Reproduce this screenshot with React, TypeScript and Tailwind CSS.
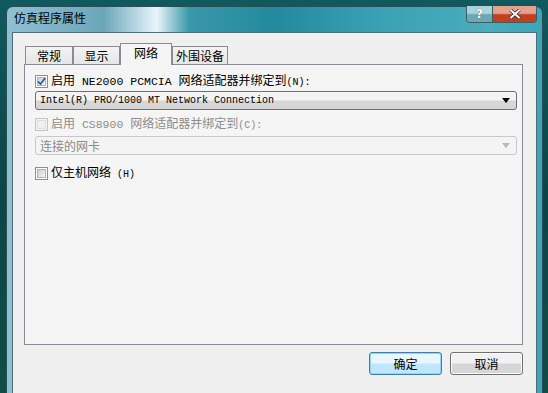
import React from "react";

const cjk = '"Noto Sans CJK SC", "Noto Sans", sans-serif';
const mono = '"Liberation Mono", "DejaVu Sans Mono", monospace';

function Latin({ children, big }: { children: React.ReactNode; big?: boolean }) {
  return (
    <span className={`whitespace-pre ${big ? "text-[11.5px]" : "text-[10px]"}`} style={{ fontFamily: mono }}>
      {children}
    </span>
  );
}

function Checkbox({ checked, disabled }: { checked?: boolean; disabled?: boolean }) {
  return (
    <div
      className={`flex h-[13px] w-[13px] shrink-0 items-center justify-center border ${
        disabled ? "border-[#c6c6c6] bg-[#f4f4f4]" : "border-[#8e8f8f] bg-white"
      }`}
    >
      <div
        className={`relative h-[9px] w-[9px] border ${
          disabled
            ? "border-[#e0e0e0] bg-[#f0f0f0]"
            : "border-[#b3b3b3] bg-gradient-to-br from-[#cbcfd5] to-[#f6f6f6]"
        }`}
      >
        {checked && (
          <svg viewBox="0 0 9 9" className="absolute left-[-1px] top-[-1px] h-[9px] w-[9px]">
            <path d="M1 4.5 L3.5 7 L8 1.2" fill="none" stroke="#2d56a8" strokeWidth="1.7" />
          </svg>
        )}
      </div>
    </div>
  );
}

function Select({ text, disabled, monoText }: { text: string; disabled?: boolean; monoText?: boolean }) {
  return (
    <div
      className={`flex h-[19px] w-[482px] items-center justify-between rounded-[3px] border pl-[4px] pr-[6px] ${
        disabled
          ? "border-[#c9c9c9] bg-[#f4f4f4] text-[#8a8a8a]"
          : "border-[#707070] bg-gradient-to-b from-[#f4f4f4] from-45% to-[#d6d6d6] to-55% text-black"
      }`}
    >
      {monoText ? (
        <span className="text-[10px] leading-none" style={{ fontFamily: mono }}>
          {text}
        </span>
      ) : (
        <span className="text-[12px] leading-none">{text}</span>
      )}
      <svg viewBox="0 0 8 5" className="h-[5px] w-[8px]">
        <path d="M0 0 H8 L4 5 Z" fill={disabled ? "#b8b8b8" : "#000"} />
      </svg>
    </div>
  );
}

function Tab({ label, width, selected }: { label: string; width: number; selected?: boolean }) {
  return (
    <div
      className={`flex items-center justify-center border border-b-0 border-[#898c95] text-[12px] leading-none ${
        selected
          ? "relative z-10 -mb-px h-[22px] bg-[#f5f5f5] pb-[3px]"
          : "h-[18px] bg-gradient-to-b from-[#f3f3f3] to-[#e6e6e6] pt-[1px]"
      }`}
      style={{ width }}
    >
      {label}
    </div>
  );
}

function Button({ label, focused }: { label: string; focused?: boolean }) {
  return (
    <div
      className={`flex h-[23px] w-[73px] items-center justify-center rounded-[3px] border text-[12px] ${
        focused
          ? "border-[#3c7fb1] bg-gradient-to-b from-[#eaf6fd] from-45% to-[#bee6fd] to-55% shadow-[inset_0_0_0_1px_#8fd4f9]"
          : "border-[#707070] bg-gradient-to-b from-[#f2f2f2] from-45% to-[#d6d6d6] to-55% shadow-[inset_0_0_0_1px_#fbfbfb]"
      }`}
    >
      {label}
    </div>
  );
}

export default function App() {
  return (
    <div
      className="h-[393px] w-[548px] overflow-hidden bg-gradient-to-b from-[#0f5a5e] via-[#0c4547] to-[#0f4d45] pl-[6px] pt-[6px]"
      style={{ fontFamily: cjk }}
    >
      <div className="flex h-[394px] w-[537px] flex-col rounded-t-[7px] border border-[#2c4d55] bg-[linear-gradient(90deg,#8fc0d4_0%,#6aa6b8_18%,#cfe6f2_26%,#e9f4fa_28%,#3a98aa_34%,#228a9d_50%,#3aa2b4_70%,#4aacbc_90%,#3aa6b8_100%)] px-[5px]">
        {/* title bar */}
        <div className="flex h-[25px] shrink-0 items-start justify-between">
          <span className="pl-[2px] pt-[5px] text-[12px] leading-none text-black">仿真程序属性</span>
          <div className="-mt-px flex h-[17px] overflow-hidden rounded-b-[4px] border border-t-0 border-[#3d5e66]">
            <div className="flex w-[26px] items-center justify-center border-r border-[#3d5e66] bg-gradient-to-b from-[#a9d4dd] from-45% to-[#6aa8b6] to-55%">
              <span className="text-[12px] font-bold leading-none text-white" style={{ fontFamily: '"DejaVu Sans", sans-serif', textShadow: "0 0 1px #333" }}>
                ?
              </span>
            </div>
            <div className="flex w-[43px] items-center justify-center bg-gradient-to-b from-[#e4a18e] from-45% to-[#c3401e] to-55%">
              <svg viewBox="0 0 12 10" className="h-[10px] w-[12px]">
                <path d="M1.5 1 L10.5 9 M10.5 1 L1.5 9" stroke="#2b2b2b" strokeWidth="3.6" />
                <path d="M1.5 1 L10.5 9 M10.5 1 L1.5 9" stroke="#fff" strokeWidth="2" />
              </svg>
            </div>
          </div>
        </div>

        {/* client area */}
        <div className="flex flex-1 flex-col border border-[#4d6d75] bg-[#f0f0f0] pl-[11px] pr-[12px] pt-[10px] text-black">
          <div className="flex items-end pl-[1px]">
            <Tab label="常规" width={48} />
            <Tab label="显示" width={47} />
            <Tab label="网络" width={52} selected />
            <Tab label="外围设备" width={56} />
          </div>
          <div className="flex h-[281px] w-[499px] flex-col border border-[#898c95] bg-[#f5f5f5] pl-[10px] pt-[9px]">
            <div className="flex items-center gap-[3px] text-[12px] leading-none">
              <Checkbox checked />
              <span>
                启用<Latin big> NE2000 PCMCIA </Latin>网络适配器并绑定到<Latin>(N):</Latin>
              </span>
            </div>
            <div className="mt-[3px]">
              <Select text="Intel(R) PRO/1000 MT Network Connection" monoText />
            </div>
            <div className="mt-[7px] flex items-center gap-[3px] text-[12px] leading-none text-[#8d8d8d]">
              <Checkbox disabled />
              <span>
                启用<Latin big> CS8900 </Latin>网络适配器并绑定到<Latin>(C):</Latin>
              </span>
            </div>
            <div className="mt-[5px]">
              <Select text="连接的网卡" disabled />
            </div>
            <div className="mt-[11px] flex items-center gap-[3px] text-[12px] leading-none">
              <Checkbox />
              <span>
                仅主机网络<Latin> (H)</Latin>
              </span>
            </div>
          </div>
          <div className="mt-[7px] flex justify-end gap-[8px] pr-[1px]">
            <Button label="确定" focused />
            <Button label="取消" />
          </div>
        </div>
      </div>
    </div>
  );
}
